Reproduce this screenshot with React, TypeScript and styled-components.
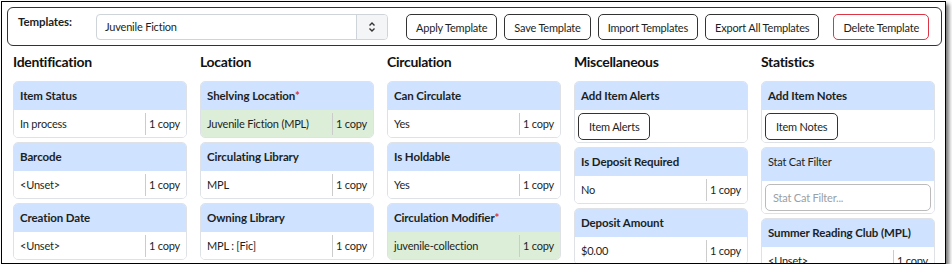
import React from "react";
import styled, { createGlobalStyle } from "styled-components";

const Global = createGlobalStyle`
  html, body { margin: 0; padding: 0; background: #fff; }
  body { font-family: Lato, "Noto Sans", sans-serif; color: #1c1f23; }
  * { box-sizing: border-box; }
`;

const Frame = styled.div`
  margin: 1px 0 0 1px;
  width: 945px;
  height: 263px;
  border: 1px solid #000;
  box-shadow: 3px 3px 4px rgba(0, 0, 0, 0.55);
  overflow: hidden;
  padding: 5px 3px 0 5px;
  background: #fff;
`;

const TemplateBar = styled.div`
  display: flex;
  align-items: flex-start;
  height: 39px;
  border: 1px solid #333;
  border-radius: 6px;
  padding: 6px 14px 0 10px;
`;

const Label = styled.div`
  flex: 0 0 78px;
  font-size: 11.5px;
  letter-spacing: -0.1px;
  font-weight: 700;
  line-height: 16px;
`;

const Select = styled.div`
  display: flex;
  flex: 0 0 292px;
  height: 26px;
  border: 1px solid #ced4da;
  border-radius: 4px;
  margin-right: 18px;
  overflow: hidden;
`;

const SelectText = styled.div`
  flex: 1;
  font-size: 11px;
  letter-spacing: -0.2px;
  line-height: 24px;
  padding-left: 8px;
`;

const SelectArrow = styled.div`
  width: 31px;
  background: #f4f5f6;
  border-left: 1px solid #ced4da;
  display: flex;
  align-items: center;
  justify-content: center;
`;

const Button = styled.button<{ $danger?: boolean; $gap?: number }>`
  flex: 0 0 auto;
  height: 26px;
  padding: 0 9px;
  margin-left: ${(p) => p.$gap ?? 7}px;
  font-family: inherit;
  font-size: 11px;
  letter-spacing: -0.2px;
  color: #1c1f23;
  background: #fff;
  border: 1px solid ${(p) => (p.$danger ? "#dc3545" : "#333")};
  border-radius: 5px;
  white-space: nowrap;
`;

const Columns = styled.div`
  display: grid;
  grid-template-columns: repeat(5, 174px);
  column-gap: 13px;
  margin: 6px 0 0 6px;
`;

const Column = styled.div`
  display: flex;
  flex-direction: column;
  gap: 4px;
`;

const Heading = styled.div`
  font-size: 14px;
  letter-spacing: -0.3px;
  font-weight: 700;
  line-height: 20px;
  margin-bottom: 5px;
  color: #111;
`;

const Card = styled.div`
  border: 1px solid #dee2e6;
  border-radius: 5px;
  overflow: hidden;
`;

const CardHeader = styled.div<{ $plain?: boolean; $tall?: boolean }>`
  background: #cfe2ff;
  height: ${(p) => (p.$tall ? 33 : 28)}px;
  padding: 0 6px;
  font-size: ${(p) => (p.$plain ? 11 : 11.5)}px;
  letter-spacing: ${(p) => (p.$plain ? -0.2 : -0.1)}px;
  font-weight: ${(p) => (p.$plain ? 400 : 700)};
  line-height: ${(p) => (p.$tall ? 27 : 28)}px;
  white-space: nowrap;
`;

const Req = styled.span`
  color: #dc3545;
`;

const Row = styled.div<{ $green?: boolean }>`
  display: flex;
  align-items: center;
  height: 27px;
  background: ${(p) => (p.$green ? "#dcedd8" : "#fff")};
  font-size: 11px;
  letter-spacing: -0.2px;
`;

const Value = styled.div`
  flex: 1;
  padding-left: 6px;
  white-space: nowrap;
`;

const Copies = styled.div`
  width: 41px;
  height: 22px;
  line-height: 22px;
  border-left: 1px solid #ccc;
  padding-left: 3px;
  white-space: nowrap;
`;

const BodyPad = styled.div`
  padding: 3px 3px 2px;
  background: #fff;
`;

const SmallButton = styled(Button)`
  margin-left: 0;
  height: 27px;
  padding: 0 10px;
`;

const Input = styled.input`
  display: block;
  width: 100%;
  height: 27px;
  border: 1px solid #bbb;
  border-radius: 5px;
  font-family: inherit;
  font-size: 11px;
  letter-spacing: -0.2px;
  padding: 0 7px;
  &::placeholder { color: #9aa0a6; }
`;

type Field = { title: string; value: string; req?: boolean; green?: boolean };

const FieldCard = ({ title, value, req, green }: Field) => (
  <Card>
    <CardHeader>
      {title}
      {req && <Req>*</Req>}
    </CardHeader>
    <Row $green={green}>
      <Value>{value}</Value>
      <Copies>1 copy</Copies>
    </Row>
  </Card>
);

export default function App() {
  return (
    <>
      <Global />
      <Frame>
        <TemplateBar>
          <Label>Templates:</Label>
          <Select>
            <SelectText>Juvenile Fiction</SelectText>
            <SelectArrow>
              <svg width="8" height="12" viewBox="0 0 8 12" fill="none" stroke="#333" strokeWidth="1.4">
                <path d="M1.5 4.5 L4 2 L6.5 4.5" />
                <path d="M1.5 7.5 L4 10 L6.5 7.5" />
              </svg>
            </SelectArrow>
          </Select>
          <Button $gap={0}>Apply Template</Button>
          <Button>Save Template</Button>
          <Button>Import Templates</Button>
          <Button>Export All Templates</Button>
          <Button $danger $gap={14}>Delete Template</Button>
        </TemplateBar>
        <Columns>
          <Column>
            <Heading>Identification</Heading>
            <FieldCard title="Item Status" value="In process" />
            <FieldCard title="Barcode" value="<Unset>" />
            <FieldCard title="Creation Date" value="<Unset>" />
          </Column>
          <Column>
            <Heading>Location</Heading>
            <FieldCard title="Shelving Location" value="Juvenile Fiction (MPL)" req green />
            <FieldCard title="Circulating Library" value="MPL" />
            <FieldCard title="Owning Library" value="MPL : [Fic]" />
          </Column>
          <Column>
            <Heading>Circulation</Heading>
            <FieldCard title="Can Circulate" value="Yes" />
            <FieldCard title="Is Holdable" value="Yes" />
            <FieldCard title="Circulation Modifier" value="juvenile-collection" req green />
          </Column>
          <Column>
            <Heading>Miscellaneous</Heading>
            <Card>
              <CardHeader>Add Item Alerts</CardHeader>
              <BodyPad>
                <SmallButton>Item Alerts</SmallButton>
              </BodyPad>
            </Card>
            <FieldCard title="Is Deposit Required" value="No" />
            <FieldCard title="Deposit Amount" value="$0.00" />
          </Column>
          <Column>
            <Heading>Statistics</Heading>
            <Card>
              <CardHeader>Add Item Notes</CardHeader>
              <BodyPad>
                <SmallButton>Item Notes</SmallButton>
              </BodyPad>
            </Card>
            <Card>
              <CardHeader $plain $tall>Stat Cat Filter</CardHeader>
              <BodyPad>
                <Input placeholder="Stat Cat Filter..." />
              </BodyPad>
            </Card>
            <FieldCard title="Summer Reading Club (MPL)" value="<Unset>" />
          </Column>
        </Columns>
      </Frame>
    </>
  );
}
